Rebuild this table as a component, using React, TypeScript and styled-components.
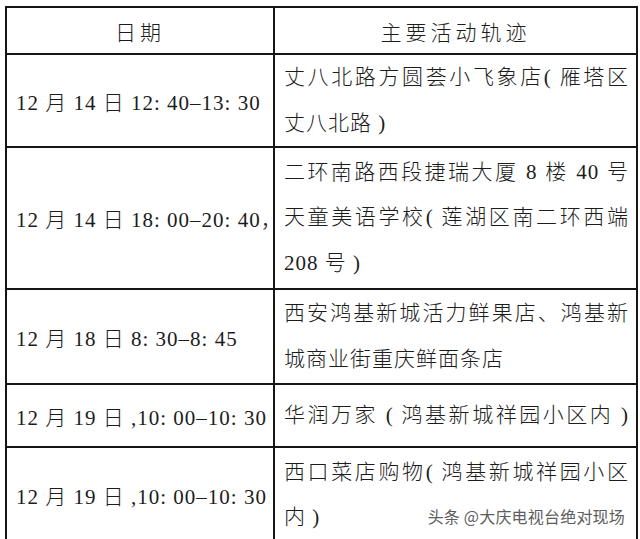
import React from "react";
import styled, { createGlobalStyle } from "styled-components";

const GlobalStyle = createGlobalStyle`
  html, body {
    margin: 0;
    padding: 0;
    background: #ffffff;
  }
  body {
    width: 640px;
    height: 539px;
    overflow: hidden;
  }
`;

const Page = styled.div`
  position: relative;
  width: 640px;
  height: 539px;
  overflow: hidden;
  box-sizing: border-box;
  padding: 6px 0 0 5px;
  background: #ffffff;
  font-family: "Liberation Serif", "Noto Sans CJK SC", serif;
  font-weight: 300;
  color: #1c1c1c;
`;

const Table = styled.table`
  width: 631px;
  border-collapse: collapse;
  table-layout: fixed;
  border: 2px solid #161616;
`;

const DateCol = styled.col`
  width: 268px;
`;

const PlaceCol = styled.col`
  width: 363px;
`;

const HeadCell = styled.th<{ $h: number }>`
  height: ${(p) => p.$h}px;
  border: 2px solid #161616;
  padding: 0;
  font-weight: 300;
  font-size: 21px;
  letter-spacing: 4px;
  text-align: center;
  vertical-align: middle;
  box-sizing: border-box;
`;

const DateCell = styled.td<{ $h: number }>`
  height: ${(p) => p.$h}px;
  border: 2px solid #161616;
  padding: 0 0 0 9px;
  font-size: 21px;
  letter-spacing: 1px;
  white-space: nowrap;
  vertical-align: middle;
  box-sizing: border-box;
`;

const PlaceCell = styled.td<{ $h: number }>`
  height: ${(p) => p.$h}px;
  border: 2px solid #161616;
  padding: 0 7px 0 9px;
  font-size: 21px;
  letter-spacing: 1px;
  vertical-align: middle;
  box-sizing: border-box;
`;

const Line = styled.span<{ $justify: boolean }>`
  display: block;
  line-height: 45.5px;
  text-align: justify;
  text-align-last: ${(p) => (p.$justify ? "justify" : "left")};
  white-space: normal;
`;

const Watermark = styled.div`
  position: absolute;
  right: 15px;
  top: 504px;
  font-family: "Noto Sans CJK SC", "Noto Sans", sans-serif;
  font-weight: 400;
  font-size: 16px;
  line-height: 24px;
  letter-spacing: 0.2px;
  color: #5e5e5e;
  text-shadow: 0 0 2px #ffffff, 0 0 2px #ffffff;
`;

type Row = { date: string; lines: string[]; h: number };

const rows: Row[] = [
  { date: "12 月 14 日 12: 40–13: 30", lines: ["丈八北路方圆荟小飞象店( 雁塔区", "丈八北路 )"], h: 93 },
  {
    date: "12 月 14 日 18: 00–20: 40，",
    lines: ["二环南路西段捷瑞大厦 8 楼 40 号", "天童美语学校( 莲湖区南二环西端", "208 号 )"],
    h: 142,
  },
  { date: "12 月 18 日 8: 30–8: 45", lines: ["西安鸿基新城活力鲜果店、鸿基新", "城商业街重庆鲜面条店"], h: 95 },
  { date: "12 月 19 日 ,10: 00–10: 30", lines: ["华润万家 ( 鸿基新城祥园小区内 )"], h: 63 },
  { date: "12 月 19 日 ,10: 00–10: 30", lines: ["西口菜店购物( 鸿基新城祥园小区", "内 )"], h: 96 },
];

export default function App() {
  return (
    <>
      <GlobalStyle />
      <Page lang="zh-CN">
        <Table>
          <colgroup>
            <DateCol />
            <PlaceCol />
          </colgroup>
          <thead>
            <tr>
              <HeadCell $h={47}>日期</HeadCell>
              <HeadCell $h={47}>主要活动轨迹</HeadCell>
            </tr>
          </thead>
          <tbody>
            {rows.map((r, i) => (
              <tr key={i}>
                <DateCell $h={r.h}>{r.date}</DateCell>
                <PlaceCell $h={r.h}>
                  {r.lines.map((l, j) => (
                    <Line key={j} $justify={j < r.lines.length - 1 || r.lines.length === 1}>
                      {l}
                    </Line>
                  ))}
                </PlaceCell>
              </tr>
            ))}
          </tbody>
        </Table>
        <Watermark>头条 @大庆电视台绝对现场</Watermark>
      </Page>
    </>
  );
}
